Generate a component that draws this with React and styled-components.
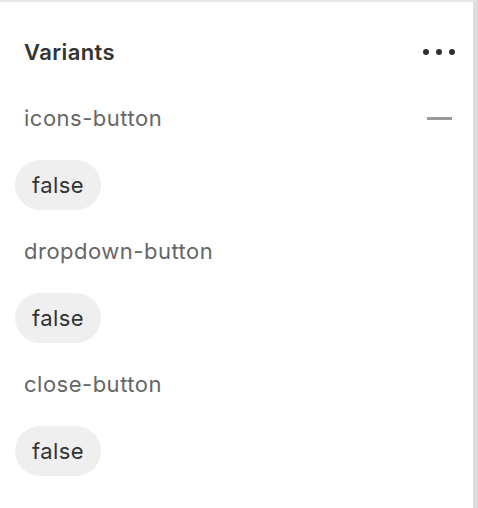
import React from "react";
import styled, { createGlobalStyle } from "styled-components";

const Global = createGlobalStyle`
  html, body { margin: 0; padding: 0; background: #ffffff; }
  body { font-family: Inter, "Noto Sans", "Liberation Sans", sans-serif; }
  * { box-sizing: border-box; }
`;

const Panel = styled.div`
  width: 478px;
  height: 508px;
  border-top: 2px solid #e6e6e6;
  border-right: 5px solid #dddddd;
  background: #fff;
  display: flex;
  flex-direction: column;
`;

const Header = styled.div`
  height: 100px;
  display: flex;
  align-items: center;
  justify-content: space-between;
  padding: 0 18px 0 24px;
`;

const Title = styled.span`
  font-size: 22px;
  font-weight: 600;
  letter-spacing: 0.4px;
  color: #333333;
`;

const Dots = styled.div`
  display: flex;
  gap: 7px;
`;

const Dot = styled.span`
  width: 6px;
  height: 6px;
  border-radius: 50%;
  background: #2f2f2f;
`;

const Group = styled.div`
  display: flex;
  flex-direction: column;
  align-items: flex-start;
  padding-bottom: 25px;
`;

const LabelRow = styled.div`
  width: 100%;
  height: 32px;
  display: flex;
  align-items: center;
  justify-content: space-between;
  padding: 0 21px 0 24px;
  margin-bottom: 26px;
`;

const Label = styled.span`
  font-size: 22px;
  letter-spacing: 0.5px;
  color: #666666;
`;

const Minus = styled.span`
  width: 25px;
  height: 3px;
  background: #9a9a9a;
`;

const Pill = styled.div`
  margin-left: 15px;
  height: 50px;
  padding: 0 17px;
  border-radius: 25px;
  background: #efefef;
  display: flex;
  align-items: center;
  font-size: 22px;
  letter-spacing: 0.4px;
  color: #333333;
`;

const variants = [
  { name: "icons-button", value: "false", removable: true },
  { name: "dropdown-button", value: "false" },
  { name: "close-button", value: "false" },
];

export default function App() {
  return (
    <>
      <Global />
      <Panel>
        <Header>
          <Title>Variants</Title>
          <Dots>
            <Dot />
            <Dot />
            <Dot />
          </Dots>
        </Header>
        {variants.map((v) => (
          <Group key={v.name}>
            <LabelRow>
              <Label>{v.name}</Label>
              {v.removable && <Minus />}
            </LabelRow>
            <Pill>{v.value}</Pill>
          </Group>
        ))}
      </Panel>
    </>
  );
}
